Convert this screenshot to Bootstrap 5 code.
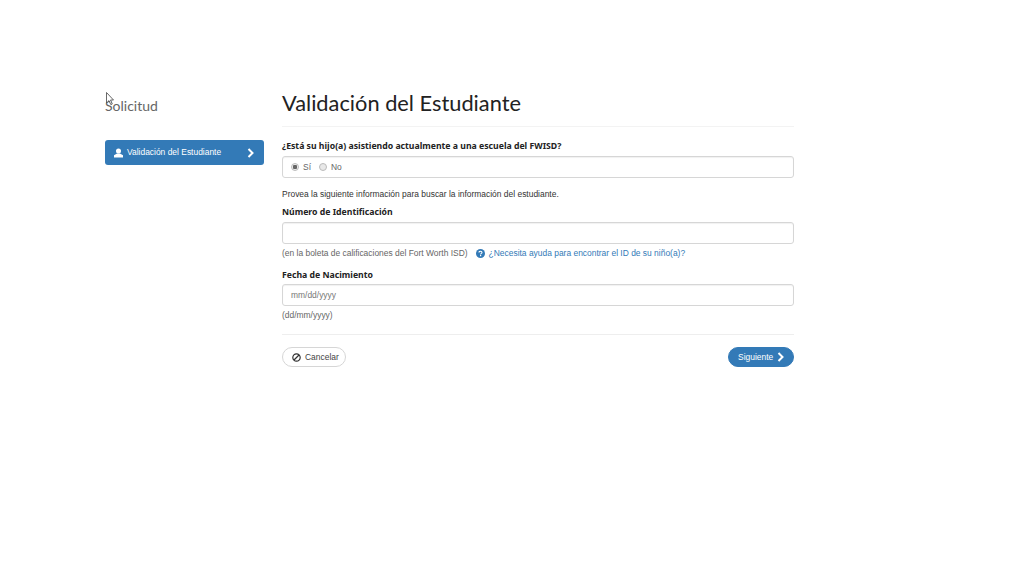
<!DOCTYPE html>
<html lang="es">

<head>
    <meta charset="UTF-8">
    <meta name="viewport" content="width=device-width, initial-scale=1.0">
    <title>Solicitud</title>
    <link href="https://cdn.jsdelivr.net/npm/bootstrap@5.3.0/dist/css/bootstrap.min.css" rel="stylesheet">
    <style>
        body {
            font-family: "Liberation Sans", sans-serif;
            font-size: 8.45px;
            color: #333;
            background: #fff;
        }

        svg {
            flex: none;
        }

        .page-wrap {
            width: 689px;
            margin-left: 105px;
            padding-top: 90px;
            gap: 18px;
            position: relative;
        }

        .side-col {
            width: 159px;
            flex: none;
        }

        .main-col {
            width: 512px;
            flex: none;
        }

        .side-title {
            font-family: "Lato", sans-serif;
            font-size: 14px;
            color: #666;
            margin: 6px 0 24px;
            line-height: 20px;
        }

        .side-item {
            height: 25px;
            background: #337ab7;
            color: #fff;
            border-radius: 3px;
            padding: 0 9px;
        }

        .side-chevron {
            margin-right: 1px;
        }

        .page-title {
            font-family: "Lato", sans-serif;
            font-size: 21.8px;
            line-height: 28px;
            color: #222;
            margin: -1px 0 0;
            padding-bottom: 9px;
            border-bottom: 1px solid #f3f3f3;
        }

        .field-label {
            font-family: "Noto Sans", sans-serif;
            font-size: 8.7px;
            font-weight: 700;
            color: #222;
            line-height: 12px;
            margin: 0 0 3px;
            display: block;
        }

        .first-label {
            margin-top: 13px;
            margin-bottom: 4px;
        }

        .id-label {
            margin-bottom: 4px;
        }

        .date-label {
            margin-top: 10px;
        }

        .radio-box,
        .text-box {
            border: 1px solid #d6d6d6;
            border-radius: 3px;
            box-shadow: inset 0 1px 1px rgba(0, 0, 0, .06);
            height: 22px;
            width: 100%;
            padding: 0 8px;
            font-size: 8.45px;
        }

        .text-box::placeholder {
            color: #777;
            opacity: 1;
        }

        .hint-text {
            color: #666;
            line-height: 12px;
        }

        .hint-gap {
            margin-top: 3px;
        }

        .intro-text {
            color: #333;
            line-height: 12px;
            margin: 10px 0 6px;
        }

        .help-link {
            color: #337ab7;
            text-decoration: none;
        }

        .radio-dot {
            width: 8px;
            height: 8px;
            border-radius: 50%;
            border: 1px solid #bbb;
            background: #e8e8e8;
            display: inline-block;
        }

        .radio-dot.is-on {
            background: radial-gradient(circle, #666 0 2px, #eee 2.5px);
        }

        .pill-btn {
            height: 20px;
            border-radius: 10px;
            font-size: 8.45px;
            padding: 0 9px;
            line-height: 1;
        }

        .pill-cancel {
            width: 64px;
            border: 1px solid #d6d6d6;
            background: #fff;
            color: #444;
        }

        .pill-next {
            width: 66px;
            border: 1px solid #337ab7;
            background: #337ab7;
            color: #fff;
        }

        .form-rule {
            border-top: 1px solid #eee;
            margin: 13px 0 12px;
        }

        .mouse-arrow {
            position: absolute;
            left: 1px;
            top: 92px;
        }
    </style>
</head>

<body>

    <div class="page-wrap d-flex">
        <!-- cursor in the screenshot -->
        <svg class="mouse-arrow" width="8" height="14" viewBox="0 0 8 14">
            <path d="M.5.5V11L3 8.6 4.8 12.6 6.3 12 4.5 8H7.5Z" fill="#fff" stroke="#444" stroke-width=".8" />
        </svg>

        <div class="side-col">
            <h2 class="side-title fw-normal">Solicitud</h2>
            <div class="side-item d-flex align-items-center">
                <svg class="me-1" width="9" height="10" viewBox="0 0 10 10">
                    <circle cx="5" cy="2.8" r="2.8" fill="#fff" />
                    <path d="M0 10V7.6L3.4 5.6H6.6L10 7.6V10Z" fill="#fff" />
                </svg>
                <span class="flex-grow-1">Validación del Estudiante</span>
                <svg class="side-chevron" width="7" height="10" viewBox="0 0 7 10">
                    <path d="M1.5 1 5.5 5 1.5 9" fill="none" stroke="#fff" stroke-width="2" />
                </svg>
            </div>
        </div>

        <div class="main-col">
            <h1 class="page-title fw-normal">Validación del Estudiante</h1>

            <label class="field-label first-label">¿Está su hijo(a) asistiendo actualmente a una escuela del FWISD?</label>
            <div class="radio-box d-flex align-items-center">
                <span class="radio-dot is-on me-1"></span><span class="hint-text me-2">Sí</span>
                <span class="radio-dot me-1"></span><span class="hint-text">No</span>
            </div>

            <p class="intro-text">Provea la siguiente información para buscar la información del estudiante.</p>

            <label class="field-label id-label">Número de Identificación</label>
            <input class="text-box d-block" type="text">
            <div class="hint-text hint-gap d-flex align-items-center">
                <span>(en la boleta de calificaciones del Fort Worth ISD)</span>
                <a class="help-link ms-2 d-flex align-items-center" href="#">
                    <svg class="me-1" width="9" height="9" viewBox="0 0 9 9">
                        <circle cx="4.5" cy="4.5" r="4.5" fill="#337ab7" />
                        <path d="M3 3.4C3 2.6 3.7 2.2 4.5 2.2S6 2.7 6 3.4C6 4.4 4.6 4.3 4.6 5.4" fill="none" stroke="#fff" stroke-width="1.1" />
                        <rect x="4" y="6" width="1.2" height="1.2" fill="#fff" />
                    </svg>
                    ¿Necesita ayuda para encontrar el ID de su niño(a)?
                </a>
            </div>

            <label class="field-label date-label">Fecha de Nacimiento</label>
            <input class="text-box d-block" type="text" placeholder="mm/dd/yyyy">
            <div class="hint-text hint-gap">(dd/mm/yyyy)</div>

            <div class="form-rule"></div>

            <div class="d-flex justify-content-between">
                <button class="btn pill-btn pill-cancel d-flex align-items-center" type="button">
                    <svg class="me-1" width="9" height="9" viewBox="0 0 9 9">
                        <circle cx="4.5" cy="4.5" r="3.7" fill="none" stroke="#333" stroke-width="1.2" />
                        <path d="M2 7 7 2" stroke="#333" stroke-width="1.2" />
                    </svg>
                    Cancelar
                </button>
                <button class="btn pill-btn pill-next d-flex align-items-center justify-content-between" type="button">
                    Siguiente
                    <svg width="7" height="10" viewBox="0 0 7 10">
                        <path d="M1.5 1 5.5 5 1.5 9" fill="none" stroke="#fff" stroke-width="2" />
                    </svg>
                </button>
            </div>
        </div>
    </div>

    <script src="https://cdn.jsdelivr.net/npm/bootstrap@5.3.0/dist/js/bootstrap.bundle.min.js"></script>

</body>

</html>
